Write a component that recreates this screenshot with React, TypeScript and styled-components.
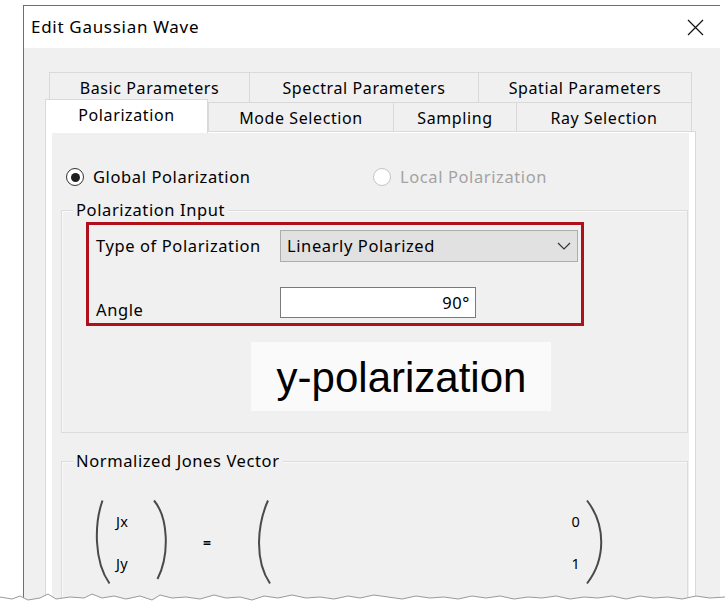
import React from "react";
import styled, { createGlobalStyle } from "styled-components";

const Global = createGlobalStyle`
  html, body { margin: 0; padding: 0; background: #ffffff; }
  body { font-family: "Noto Sans", "Open Sans", sans-serif; color: #111; }
  * { box-sizing: border-box; }
`;

const Screen = styled.div`
  position: relative;
  width: 725px;
  height: 607px;
  overflow: hidden;
  padding: 5px 0 0 23px;
`;

const Window = styled.div`
  width: 697px;
  height: 620px;
  background: #f0f0f0;
  border-top: 1px solid #6f6f6f;
  border-left: 1px solid #6f6f6f;
  display: flex;
  flex-direction: column;
`;

const TitleBar = styled.div`
  height: 42px;
  background: #ffffff;
  display: flex;
  align-items: center;
  justify-content: space-between;
  padding: 0 16px 0 7px;
  flex-shrink: 0;
`;

const Title = styled.div`
  font-size: 17px;
  letter-spacing: 0.7px;
  line-height: 20px;
  margin-top: -1px;
  color: #000;
`;

const CloseButton = styled.svg`
  width: 17px;
  height: 17px;
  display: block;
`;

const Body = styled.div`
  padding: 24px 0 0 21px;
  flex: 1;
`;

const TabStrip = styled.div`
  width: 651px;
`;

const TabRow = styled.div<{ $indent?: number; $height: number }>`
  display: flex;
  align-items: flex-end;
  height: ${(p) => p.$height}px;
  padding-left: ${(p) => p.$indent ?? 0}px;
`;

const tabText = `
  font-size: 16px;
  letter-spacing: 0.6px;
  color: #000;
  white-space: nowrap;
`;

const Tab = styled.div<{ $width: number; $last?: boolean }>`
  ${tabText}
  width: ${(p) => p.$width}px;
  height: 100%;
  display: flex;
  align-items: center;
  justify-content: center;
  background: #f0f0f0;
  border-top: 1px solid #d9d9d9;
  border-left: 1px solid #d9d9d9;
  border-right: ${(p) => (p.$last ? "1px solid #d9d9d9" : "none")};
  padding-top: 1px;
`;

const ActiveTab = styled.div<{ $width: number }>`
  ${tabText}
  width: ${(p) => p.$width}px;
  height: 34px;
  margin-bottom: -2px;
  position: relative;
  z-index: 1;
  display: flex;
  align-items: flex-start;
  justify-content: center;
  padding-top: 4px;
  background: #ffffff;
  border: 1px solid #d9d9d9;
  border-bottom: none;
`;

const Panel = styled.div`
  width: 651px;
  height: 480px;
  background: #ffffff;
  border: 1px solid #d9d9d9;
  padding: 1px 6px 0 6px;
`;

const Page = styled.div`
  height: 100%;
  background: #f0f0f0;
  padding-top: 34px;
`;

const uiText = `
  font-size: 16.5px;
  letter-spacing: 0.6px;
  line-height: 20px;
  white-space: nowrap;
`;

const RadioRow = styled.div`
  display: grid;
  grid-template-columns: 307px auto;
  height: 20px;
  padding-left: 14px;
`;

const RadioItem = styled.div<{ $disabled?: boolean }>`
  ${uiText}
  display: flex;
  align-items: center;
  gap: 9px;
  color: ${(p) => (p.$disabled ? "#a3a3a3" : "#000")};
`;

const RadioCircle = styled.span<{ $checked?: boolean; $disabled?: boolean }>`
  width: 18px;
  height: 18px;
  border-radius: 50%;
  background: #ffffff;
  border: 1.5px solid ${(p) => (p.$disabled ? "#c4c4c4" : "#333333")};
  display: flex;
  align-items: center;
  justify-content: center;
  &::after {
    content: "";
    display: ${(p) => (p.$checked ? "block" : "none")};
    width: 9px;
    height: 9px;
    border-radius: 50%;
    background: #1f1f1f;
  }
`;

const GroupBox = styled.div<{ $top: number; $height: number }>`
  margin: ${(p) => p.$top}px 1px 0 9px;
  height: ${(p) => p.$height}px;
  border: 1px solid #dcdcdc;
  box-shadow: inset 1px 1px 0 #fafafa;
`;

const Caption = styled.div`
  ${uiText}
  width: fit-content;
  margin: -11px 0 0 11px;
  padding: 0 3px;
  background: #f0f0f0;
  color: #000;
`;

const Highlight = styled.div`
  margin: 2px 0 0 24px;
  width: 498px;
  height: 104px;
  border: 3px solid #b0101c;
  padding: 5px 0 0 7px;
  display: grid;
  grid-template-columns: 184px 298px;
  grid-template-rows: 32px 31px;
  row-gap: 25px;
`;

const FieldLabel = styled.div<{ $bottom?: boolean }>`
  ${uiText}
  color: #000;
  align-self: ${(p) => (p.$bottom ? "end" : "center")};
  margin-bottom: ${(p) => (p.$bottom ? "-2px" : "0")};
`;

const Combo = styled.div`
  ${uiText}
  height: 32px;
  background: #e1e1e1;
  border: 1px solid #adadad;
  display: flex;
  align-items: center;
  justify-content: space-between;
  padding: 0 5px 0 6px;
  color: #000;
`;

const Chevron = styled.svg`
  width: 16px;
  height: 10px;
  display: block;
`;

const NumberInput = styled.div`
  ${uiText}
  width: 196px;
  height: 31px;
  background: #ffffff;
  border: 1px solid #7a7a7a;
  display: flex;
  align-items: center;
  justify-content: flex-end;
  padding-right: 5px;
  color: #000;
`;

const Note = styled.div`
  margin: 16px 0 0 189px;
  width: 300px;
  height: 69px;
  background: #fafafa;
  display: flex;
  align-items: center;
  justify-content: center;
  font-family: "Liberation Sans", Arial, sans-serif;
  font-size: 42px;
  color: #000;
  padding: 2px 0 0 1px;
`;

const JonesRow = styled.div`
  display: flex;
  align-items: center;
  height: 86px;
  margin-top: 28px;
  padding-left: 32px;
`;

const Paren = styled.svg<{ $gap: number; $w: number }>`
  width: ${(p) => p.$w}px;
  height: 86px;
  margin-left: ${(p) => p.$gap}px;
  display: block;
  flex-shrink: 0;
`;

const VectorColumn = styled.div<{ $gap: number; $width: number; $right?: boolean }>`
  margin-left: ${(p) => p.$gap}px;
  width: ${(p) => p.$width}px;
  height: 86px;
  display: flex;
  flex-direction: column;
  justify-content: center;
  align-items: ${(p) => (p.$right ? "flex-end" : "flex-start")};
  row-gap: 22px;
  font-size: 14.5px;
  letter-spacing: 0.3px;
  line-height: 20px;
  color: #000;
`;

const Equals = styled.div`
  margin-left: 34px;
  width: 10px;
  font-size: 14px;
  font-weight: 700;
  color: #000;
`;

const TornEdge = styled.svg`
  position: absolute;
  left: 0;
  bottom: 0;
  width: 725px;
  height: 16px;
  display: block;
`;

const leftParen = "M8.5 1.5 C0.5 24 -0.5 62 15.5 84.5";
const rightParen = "M2 1.5 C16 18 18 55 5.5 80";
const openParen = "M15 1.5 C5 24 0.5 60 17 84.5";
const closeParen = "M2 1.5 C21 26 21 60 2 84.5";

const edgePoints = [
  [0, 6], [12, 8], [20, 5], [28, 9], [40, 7], [48, 3], [56, 8], [70, 6], [84, 7], [92, 3],
  [102, 7], [114, 5], [126, 8], [140, 5], [152, 9], [160, 4], [172, 7], [186, 6], [200, 8],
  [214, 4], [226, 7], [240, 6], [252, 9], [264, 5], [278, 7], [292, 4], [306, 7], [320, 6],
  [334, 8], [348, 5], [360, 7], [374, 4], [388, 6], [402, 8], [416, 5], [430, 7], [444, 6],
  [458, 8], [472, 5], [486, 7], [500, 5], [514, 8], [528, 6], [542, 7], [556, 5], [570, 8],
  [584, 6], [598, 7], [612, 5], [626, 8], [640, 5], [654, 7], [668, 6], [682, 8], [696, 5],
  [710, 7], [725, 6],
];

export default function App() {
  const edge = edgePoints.map(([x, y]) => `${x},${y}`).join(" ");
  return (
    <Screen>
      <Global />
      <Window>
        <TitleBar>
          <Title>Edit Gaussian Wave</Title>
          <CloseButton viewBox="0 0 17 17">
            <path d="M1 1 L16 16 M16 1 L1 16" stroke="#111" strokeWidth="1.2" fill="none" />
          </CloseButton>
        </TitleBar>
        <Body>
          <TabStrip>
            <TabRow $indent={4} $height={30}>
              <Tab $width={200}>Basic Parameters</Tab>
              <Tab $width={229}>Spectral Parameters</Tab>
              <Tab $width={214} $last>Spatial Parameters</Tab>
            </TabRow>
            <TabRow $height={29}>
              <ActiveTab $width={163}>Polarization</ActiveTab>
              <Tab $width={185}>Mode Selection</Tab>
              <Tab $width={123}>Sampling</Tab>
              <Tab $width={176} $last>Ray Selection</Tab>
            </TabRow>
          </TabStrip>
          <Panel>
            <Page>
              <RadioRow>
                <RadioItem>
                  <RadioCircle $checked />
                  Global Polarization
                </RadioItem>
                <RadioItem $disabled>
                  <RadioCircle $disabled />
                  Local Polarization
                </RadioItem>
              </RadioRow>

              <GroupBox $top={23} $height={223}>
                <Caption>Polarization Input</Caption>
                <Highlight>
                  <FieldLabel>Type of Polarization</FieldLabel>
                  <Combo>
                    Linearly Polarized
                    <Chevron viewBox="0 0 16 10">
                      <path d="M2 2 L8 8 L14 2" stroke="#333" strokeWidth="1.2" fill="none" />
                    </Chevron>
                  </Combo>
                  <FieldLabel $bottom>Angle</FieldLabel>
                  <NumberInput>90°</NumberInput>
                </Highlight>
                <Note>y-polarization</Note>
              </GroupBox>

              <GroupBox $top={28} $height={200}>
                <Caption>Normalized Jones Vector</Caption>
                <JonesRow>
                  <Paren $gap={0} $w={17} viewBox="0 0 17 86">
                    <path d={leftParen} stroke="#4a4a4a" strokeWidth="2" fill="none" />
                  </Paren>
                  <VectorColumn $gap={5} $width={31}>
                    <span>Jx</span>
                    <span>Jy</span>
                  </VectorColumn>
                  <Paren $gap={5} $w={17} viewBox="0 0 17 86">
                    <path d={rightParen} stroke="#4a4a4a" strokeWidth="2" fill="none" />
                  </Paren>
                  <Equals>=</Equals>
                  <Paren $gap={40} $w={18} viewBox="0 0 18 86">
                    <path d={openParen} stroke="#4a4a4a" strokeWidth="2" fill="none" />
                  </Paren>
                  <VectorColumn $gap={0} $width={309} $right>
                    <span>0</span>
                    <span>1</span>
                  </VectorColumn>
                  <Paren $gap={5} $w={20} viewBox="0 0 20 86">
                    <path d={closeParen} stroke="#4a4a4a" strokeWidth="2" fill="none" />
                  </Paren>
                </JonesRow>
              </GroupBox>
            </Page>
          </Panel>
        </Body>
      </Window>
      <TornEdge viewBox="0 0 725 16" preserveAspectRatio="none">
        <polygon points={`${edge} 725,16 0,16`} fill="#ffffff" />
        <polyline points={edge} stroke="#9a9a9a" strokeWidth="1" fill="none" />
      </TornEdge>
    </Screen>
  );
}
